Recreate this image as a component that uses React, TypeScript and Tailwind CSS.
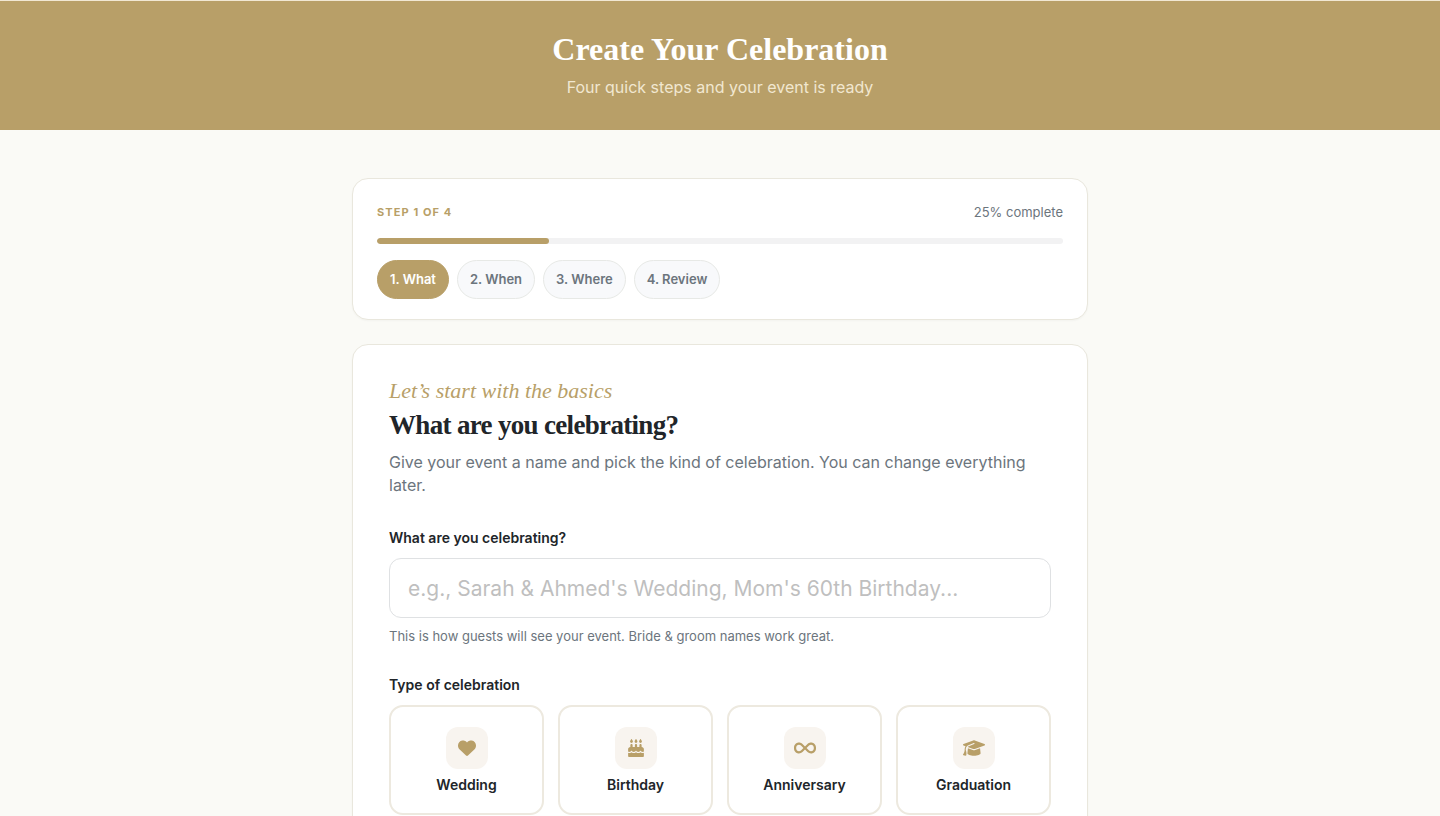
import { useState } from 'react';
import { FaCakeCandles, FaGraduationCap, FaHeart, FaInfinity } from 'react-icons/fa6';

const steps = ['What', 'When', 'Where', 'Review'];

const celebrationTypes = [
  { id: 'wedding', label: 'Wedding', icon: FaHeart, iconSize: 'h-[18px] w-auto' },
  { id: 'birthday', label: 'Birthday', icon: FaCakeCandles, iconSize: 'h-[18px] w-auto' },
  { id: 'anniversary', label: 'Anniversary', icon: FaInfinity, iconSize: 'h-auto w-[22px]' },
  { id: 'graduation', label: 'Graduation', icon: FaGraduationCap, iconSize: 'h-auto w-[22px]' },
];

const PageHeader = () => (
  <header className="border-t border-[#f1e7d3] bg-[#b89f68] px-4 pt-6 pb-[31px] text-center">
    <h1 className="font-['Liberation_Serif',serif] text-[32px] leading-12 font-bold text-white">
      Create Your Celebration
    </h1>
    <p className="mt-0.5 text-[16px] leading-6 text-[#f1e7d0]">Four quick steps and your event is ready</p>
  </header>
);

interface StepProgressProps {
  current: number;
  onSelect: (step: number) => void;
}

const StepProgress = ({ current, onSelect }: StepProgressProps) => {
  const percent = (current / steps.length) * 100;

  return (
    <section className="rounded-2xl border border-[#e9e7dd] bg-white px-6 py-5 shadow-[0_1px_2px_rgba(0,0,0,0.03)]">
      <div className="mb-[13px] flex items-center justify-between leading-[26px]">
        <span className="text-[11px] font-bold tracking-widest text-[#b89f68] uppercase">
          Step {current} of {steps.length}
        </span>
        <span className="text-[13px] text-[#6c757d]">{percent}% complete</span>
      </div>
      <div className="h-1.5 overflow-hidden rounded-full bg-[#f2f2f3]">
        <div className="h-full rounded-full bg-[#b89f68]" style={{ width: `${percent}%` }} />
      </div>
      <div className="mt-4 flex flex-wrap gap-2">
        {steps.map((step, i) => (
          <button
            key={step}
            type="button"
            onClick={() => onSelect(i + 1)}
            className={
              i + 1 === current
                ? 'rounded-full border border-[#b89f68] bg-[#b89f68] px-3 py-2 text-[13px] leading-[21px] font-semibold text-white'
                : 'rounded-full border border-[#e7e9e6] bg-[#f8f9fb] px-3 py-2 text-[13px] leading-[21px] font-semibold text-[#6c757d]'
            }
          >
            {i + 1}. {step}
          </button>
        ))}
      </div>
    </section>
  );
};

const App = () => {
  const [step, setStep] = useState(1);
  const [name, setName] = useState('');
  const [type, setType] = useState('');

  return (
    <div className="min-h-screen bg-[#fafaf6] font-[Inter,sans-serif] text-[#212529]">
      <PageHeader />

      <main className="mx-auto flex max-w-3xl flex-col gap-6 px-4 pt-12">
        <StepProgress current={step} onSelect={setStep} />

        <form className="rounded-2xl border border-[#e9e7dd] bg-white px-9 py-8 shadow-[0_1px_2px_rgba(0,0,0,0.03)]">
          <p className="font-['Liberation_Serif',serif] text-[22px] leading-7 text-[#b89f68] italic">
            Let’s start with the basics
          </p>
          <h2 className="font-['Liberation_Serif',serif] text-[27px] leading-10 font-bold tracking-tight">
            What are you celebrating?
          </h2>
          <p className="mt-1.5 text-[16px] leading-[23px] text-[#6c757d]">
            Give your event a name and pick the kind of celebration. You can change everything later.
          </p>

          {/* Event name */}
          <div className="mt-[31px]">
            <label htmlFor="event-name" className="block text-[14px] leading-5 font-semibold">
              What are you celebrating?
            </label>
            <input
              id="event-name"
              type="text"
              value={name}
              onChange={(e) => setName(e.target.value)}
              placeholder="e.g., Sarah & Ahmed's Wedding, Mom's 60th Birthday..."
              className="mt-2.5 h-15 w-full rounded-xl border border-[#dfe1e3] bg-white px-[18px] text-[21px] placeholder:text-[#bfbfbf]"
            />
            <p className="mt-2.5 text-[13px] leading-[17px] text-[#6c757d]">
              This is how guests will see your event. Bride &amp; groom names work great.
            </p>
          </div>

          {/* Celebration type */}
          <fieldset className="mt-[30px]">
            <legend className="text-[14px] leading-5 font-semibold">Type of celebration</legend>
            <div className="mt-2.5 grid grid-cols-2 gap-3.5 sm:grid-cols-4">
              {celebrationTypes.map(({ id, label, icon: Icon, iconSize }) => (
                <button
                  key={id}
                  type="button"
                  aria-pressed={type === id}
                  onClick={() => setType(id)}
                  className="flex flex-col items-center rounded-[14px] border-2 border-[#ede9df] bg-white py-5 aria-pressed:border-[#b89f68]"
                >
                  <span className="flex size-[42px] items-center justify-center rounded-xl bg-[#f8f4ef] text-[#b89f68]">
                    <Icon className={iconSize} />
                  </span>
                  <span className="mt-2 text-[14px] leading-4 font-semibold">{label}</span>
                </button>
              ))}
            </div>
          </fieldset>
        </form>
      </main>
    </div>
  );
};

export default App;
